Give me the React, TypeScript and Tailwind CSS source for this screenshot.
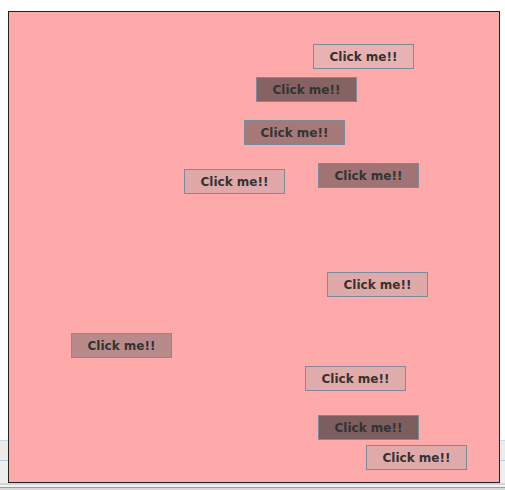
import React from "react";

type Btn = { x: number; y: number; bg: string; border?: string };

const buttons: Btn[] = [
  { x: 313, y: 44, bg: "#e8b2b2" },
  { x: 256, y: 77, bg: "#866262" },
  { x: 244, y: 120, bg: "#a77878" },
  { x: 184, y: 169, bg: "#e0a8a8" },
  { x: 318, y: 163, bg: "#a07474" },
  { x: 327, y: 272, bg: "#e0a9a9" },
  { x: 71, y: 333, bg: "#b88a8a", border: "#888a8c" },
  { x: 305, y: 366, bg: "#e0abab" },
  { x: 318, y: 415, bg: "#7c5e5e" },
  { x: 366, y: 445, bg: "#e0aaaa" },
];

export default function App() {
  return (
    <div
      className="relative w-[505px] h-[490px] overflow-hidden bg-white"
      style={{ fontFamily: '"DejaVu Sans", sans-serif' }}
    >
      {/* background window chrome underneath */}
      <div className="flex flex-col w-full h-full">
        <div className="h-[440px] bg-white" />
        <div className="h-px bg-[#c4daf0]" />
        <div className="h-[19px] bg-[#ececec]" />
        <div className="h-px bg-[#b4cce6]" />
        <div className="h-[22px] bg-[#eeeeee]" />
        <div className="h-[2px] bg-[#d4d4d4]" />
        <div className="h-[2px] bg-[#f2f2f2]" />
        <div className="h-px bg-[#9c9c9c]" />
        <div className="flex-1 bg-[#d8d8d8]" />
      </div>

      {/* panel */}
      <div className="absolute left-[8px] top-[11px] w-[492px] h-[472px] border border-[#222222] bg-[#ffaaaa]">
        {buttons.map((b, i) => (
          <button
            key={i}
            className="absolute w-[101px] h-[25px] border flex items-center justify-center text-[12px] font-bold text-[#333333] leading-none p-0"
            style={{
              left: b.x - 9,
              top: b.y - 12,
              backgroundColor: b.bg,
              borderColor: b.border ?? "#7b8b9b",
            }}
          >
            Click me!!
          </button>
        ))}
      </div>
    </div>
  );
}
